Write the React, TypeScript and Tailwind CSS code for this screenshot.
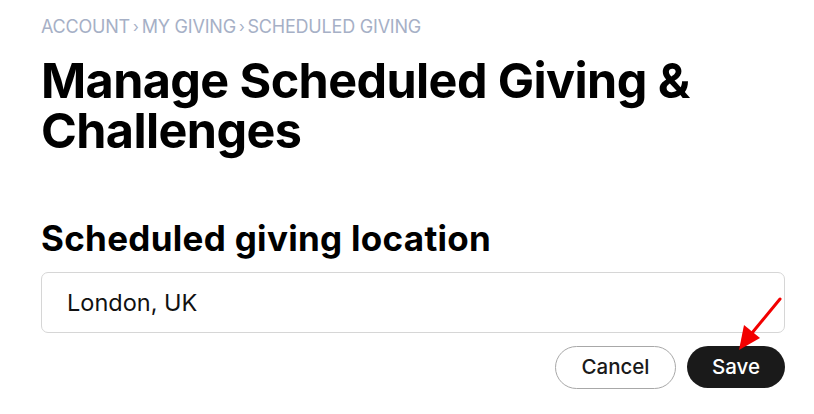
import React from "react";

export default function App() {
  return (
    <div className="relative w-[814px] h-[414px] bg-white overflow-hidden" style={{ fontFamily: "Inter, 'Noto Sans', sans-serif" }}>
      <div className="pl-[41px] pr-[29px] pt-[15px]">
        <div className="flex items-center text-[18px] leading-[24px] text-[#a6b0c6] tracking-[-0.2px]">
          <span>ACCOUNT</span>
          <span className="mx-[3px] text-[15px]">›</span>
          <span>MY GIVING</span>
          <span className="mx-[3px] text-[15px]">›</span>
          <span>SCHEDULED GIVING</span>
        </div>
        <h1 className="mt-[17px] text-[48.5px] leading-[50px] font-bold text-black tracking-[-0.6px]">
          Manage Scheduled Giving &amp;
          <br />
          Challenges
        </h1>
        <h2 className="mt-[62px] text-[35px] leading-[40px] font-bold text-black tracking-[0.3px]">
          Scheduled giving location
        </h2>
        <div className="mt-[14px] h-[61px] rounded-[7px] border border-[#d6d6d6] flex items-center pl-[25px] text-[23.5px] text-[#111]">
          London, UK
        </div>
        <div className="mt-[13px] flex justify-end gap-[11px]">
          <button className="w-[121px] h-[43px] rounded-full border border-[#a8a8a8] bg-white text-[20.5px] font-medium text-[#1a1a1a]">
            Cancel
          </button>
          <button className="w-[98px] h-[42px] rounded-full bg-[#1a1a1a] text-[20.5px] font-medium text-white">
            Save
          </button>
        </div>
      </div>
      <svg className="absolute left-0 top-0" width="814" height="414" viewBox="0 0 814 414">
        <line x1="780" y1="299" x2="752" y2="333" stroke="#f20000" strokeWidth="3" strokeLinecap="round" />
        <polygon points="739,350 744,325 760,338" fill="#f20000" />
      </svg>
    </div>
  );
}
